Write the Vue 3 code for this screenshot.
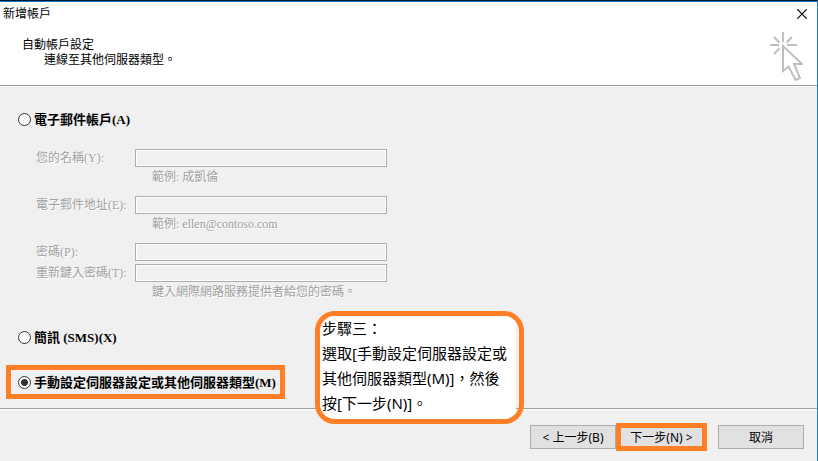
<script setup>
import { ref } from 'vue'

const mode = ref('manual')
const groups = [
  [{ id: 'name', label: '您的名稱(Y):', type: 'text', hint: '範例: 成凱倫' }],
  [{ id: 'email', label: '電子郵件地址(E):', type: 'email', hint: '範例: ellen@contoso.com' }],
  [
    { id: 'password', label: '密碼(P):', type: 'password' },
    { id: 'confirm', label: '重新鍵入密碼(T):', type: 'password', hint: '鍵入網際網路服務提供者給您的密碼。' },
  ],
]
</script>

<template>
  <div class="dialog">
    <header class="head">
      <div class="titlebar">
        <span>新增帳戶</span>
        <button class="close" type="button" aria-label="關閉">
          <svg width="10" height="10" viewBox="0 0 10 10">
            <path d="M0.3 0.3 9.7 9.7M9.7 0.3 0.3 9.7" fill="none" stroke="#000" stroke-width="1.2" />
          </svg>
        </button>
      </div>
      <div class="banner">
        <div>
          <h1>自動帳戶設定</h1>
          <p>連線至其他伺服器類型。</p>
        </div>
        <svg class="pointer" width="34" height="50" viewBox="0 0 34 50" fill="none" stroke="#bfbfbf" stroke-width="2">
          <path d="M14 0V10M1 13H10M18 13H28M5 5 10.500 10.500M23 5 17.500 10.500M5 22 10.500 16.500" />
          <path d="M14 14V39L19.500 34.500L26.500 48L31 46L25 32H33Z" />
        </svg>
      </div>
    </header>

    <main class="body">
      <label class="option"><input v-model="mode" type="radio" name="mode" value="email" /><span>電子郵件帳戶(A)</span></label>
      <div class="fields">
        <div v-for="(group, i) in groups" :key="i" class="group">
          <div v-for="f in group" :key="f.id" class="field">
            <label :for="f.id">{{ f.label }}</label>
            <input :id="f.id" :type="f.type" disabled />
            <p v-if="f.hint" class="hint">{{ f.hint }}</p>
          </div>
        </div>
      </div>
      <label class="option"><input v-model="mode" type="radio" name="mode" value="sms" /><span>簡訊 (SMS)(X)</span></label>
      <label class="option marked"><input v-model="mode" type="radio" name="mode" value="manual" /><span>手動設定伺服器設定或其他伺服器類型(M)</span></label>
    </main>

    <footer class="foot">
      <button class="btn" type="button">&lt; 上一步(B)</button>
      <div class="ring"><button class="btn" type="button">下一步(N) &gt;</button></div>
      <button class="btn cancel" type="button">取消</button>
    </footer>

    <aside class="callout">
      <p>步驟三：<br />選取[手動設定伺服器設定或<br />其他伺服器類型(M)]，然後<br />按[下一步(N)]。</p>
    </aside>
  </div>
</template>

<style>
body {
  background: #f0f0f0;
}
</style>

<style scoped>
* {
  box-sizing: border-box;
}
h1,
p {
  margin: 0;
  font-size: inherit;
  font-weight: 400;
}
.dialog {
  position: relative;
  min-height: 100vh;
  border-top: 1px solid #07182c;
  border-right: 1px solid #1b7cd0;
  background: #f0f0f0;
  color: #000;
  font: 12px/16px "Noto Sans", "Noto Sans CJK TC", sans-serif;
  white-space: nowrap;
}
.head {
  height: 85px;
  border-top: 1px solid #1b74c5;
  background: #fff;
  border-bottom: 1px solid #a0a0a0;
}
.titlebar {
  display: flex;
  justify-content: space-between;
  height: 24px;
  padding: 4px 10px 0 3px;
}
.close {
  display: flex;
  height: 16px;
  padding: 3px 0 0;
  border: 0;
  background: none;
}
.banner {
  display: flex;
  justify-content: space-between;
  padding: 11px 14px 0 22px;
}
.banner h1,
.banner p {
  line-height: 15px;
}
.banner p {
  padding-left: 22px;
}
.pointer {
  margin-top: -5px;
}
.body {
  display: flex;
  flex-direction: column;
  align-items: flex-start;
  padding: 20px 6px 9px;
  border-top: 1px solid #fff;
}
.option {
  display: flex;
  align-items: center;
  gap: 3px;
  height: 24px;
  padding-left: 12px;
  font: 700 13px/16px "Liberation Serif", "Noto Sans CJK TC", serif;
}
.option span {
  padding-top: 2px;
}
.option input {
  appearance: none;
  width: 13px;
  height: 13px;
  margin: 0;
  border: 1px solid #333;
  border-radius: 50%;
  background: #fff;
}
.option input:checked {
  background: radial-gradient(circle, #333 3px, #fff 4px);
}
.marked {
  height: 34px;
  margin-top: 16px;
  padding: 0 4px 0 7px;
  border: 5px solid #ff7f27;
}
.fields {
  display: flex;
  flex-direction: column;
  gap: 11px;
  padding: 18px 0 25px 30px;
  color: #a0a0a0;
  font-family: "Liberation Serif", "Noto Sans CJK TC", serif;
  text-shadow: 1px 1px 0 #fff;
}
.group {
  display: flex;
  flex-direction: column;
  gap: 3px;
}
.field {
  display: grid;
  grid-template-columns: 99px 252px;
  align-items: center;
}
.field label {
  height: 18px;
  line-height: 18px;
}
.field input {
  width: 100%;
  height: 18px;
  padding: 0 4px;
  border: 1px solid #abadb3;
  background: #f0f0f0;
  box-shadow: inset 0 0 0 1px #fff;
}
.hint {
  grid-column: 2;
  height: 18px;
  padding-left: 17px;
  line-height: 20px;
}
.foot {
  display: flex;
  justify-content: flex-end;
  align-items: center;
  padding: 14px 13px 9px;
  border-top: 1px solid #a0a0a0;
  box-shadow: inset 0 1px 0 #fff;
}
.btn {
  width: 86px;
  height: 24px;
  padding: 2px 0 0;
  border: 1px solid #adadad;
  background: #e1e1e1;
  color: #000;
  font: inherit;
}
.ring {
  border: 5px solid #ff7f27;
}
.ring .btn {
  display: block;
  width: 81px;
  height: 18px;
  border: 0;
}
.cancel {
  margin-left: 11px;
}
.callout {
  position: absolute;
  left: 315px;
  top: 310px;
  overflow: hidden;
  padding-right: 3px;
  border: 5px solid #ff7f27;
  border-radius: 20px;
}
.callout p {
  width: 196px;
  padding: 0 0 3px 2px;
  background: #fff;
  font-size: 15px;
  line-height: 25px;
}
</style>
